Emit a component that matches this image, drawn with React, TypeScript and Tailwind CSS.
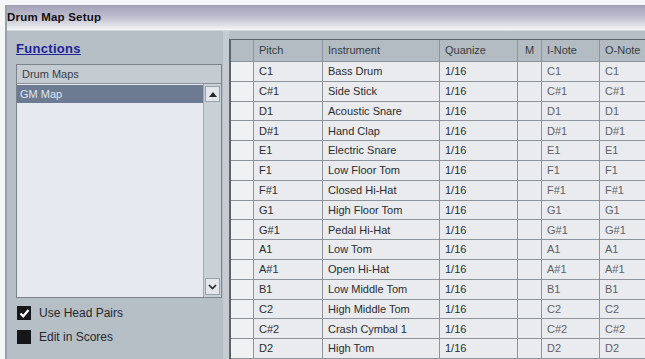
const rows: [string, string][] = [
  ["C1", "Bass Drum"],
  ["C#1", "Side Stick"],
  ["D1", "Acoustic Snare"],
  ["D#1", "Hand Clap"],
  ["E1", "Electric Snare"],
  ["F1", "Low Floor Tom"],
  ["F#1", "Closed Hi-Hat"],
  ["G1", "High Floor Tom"],
  ["G#1", "Pedal Hi-Hat"],
  ["A1", "Low Tom"],
  ["A#1", "Open Hi-Hat"],
  ["B1", "Low Middle Tom"],
  ["C2", "High Middle Tom"],
  ["C#2", "Crash Cymbal 1"],
  ["D2", "High Tom"],
];

const grid = "grid grid-cols-[23px_69px_117px_78px_24px_58px_90px]";
const cell = "flex items-center border-r border-b border-[#8d949b] px-[5px] whitespace-nowrap overflow-hidden";

function Checkbox({ checked }: { checked?: boolean }) {
  return (
    <div className="flex h-[14px] w-[14px] items-center justify-center bg-[#15171a]">
      {checked && (
        <svg width="11" height="11" viewBox="0 0 11 11">
          <path d="M1.5 5.5 L4.3 8.3 L9.5 2" fill="none" stroke="#ffffff" strokeWidth="2.2" />
        </svg>
      )}
    </div>
  );
}

export default function App() {
  return (
    <div className="flex h-[359px] w-[645px] flex-col overflow-hidden bg-[#f5f6f8] pb-[3px] pl-[5px] pt-[5px] font-['Liberation_Sans',Arial,sans-serif] text-[11px] text-[#2e3135]">
      <div className="flex flex-1 flex-col border-l-2 border-[#9aa2a9]">
        {/* Title bar */}
        <div className="flex h-[25px] items-center border-t border-[#a09eb0] bg-gradient-to-b from-[#a5a3b9] via-[#c2c1d1] to-[#f4f7f7]">
          <span className="text-[11.5px] font-bold tracking-[0.2px] text-[#101014]">Drum Map Setup</span>
        </div>

        {/* Body */}
        <div className="flex flex-1 overflow-hidden border-t border-[#d3d9dc] bg-[#b7bfc6]">
          {/* Left panel */}
          <div className="flex w-[216px] flex-col pl-[9px]">
            <div className="mt-[10px] h-[16px] text-[13px] font-bold leading-[16px] tracking-[0.3px] text-[#1c239c] underline">
              Functions
            </div>
            <div className="mt-[7px] flex h-[234px] w-[206px] flex-col border border-[#7c848b] bg-[#e6e9ef]">
              <div className="flex h-[19px] items-center border-b border-[#8a9299] bg-[#c4cbd1] pl-[5px] text-[#3a3e44]">
                Drum Maps
              </div>
              <div className="flex flex-1">
                <div className="flex flex-1 flex-col pt-[1px]">
                  <div className="flex h-[18px] items-center bg-[#6d7b92] pl-[3px] text-[#dfe5ef]">GM Map</div>
                </div>
                <div className="flex w-[18px] flex-col justify-between border-l border-[#a3abb2] bg-[#c9d1d7] px-[1px] py-[2px]">
                  <div className="flex h-[16px] items-center justify-center border border-[#9aa2a9] bg-[#e3e7ec]">
                    <svg width="8" height="5" viewBox="0 0 8 5">
                      <path d="M0 5 L4 0 L8 5 Z" fill="#23262a" />
                    </svg>
                  </div>
                  <div className="flex h-[17px] items-center justify-center border border-[#9aa2a9] bg-[#e3e7ec]">
                    <svg width="9" height="6" viewBox="0 0 9 6">
                      <path d="M1 1 L4.5 4.5 L8 1" fill="none" stroke="#23262a" strokeWidth="1.6" />
                    </svg>
                  </div>
                </div>
              </div>
            </div>
            <div className="mt-[6px] flex items-center gap-[8px] pl-[1px]">
              <Checkbox checked />
              <span className="text-[12px] text-[#25282c]">Use Head Pairs</span>
            </div>
            <div className="mt-[6px] flex items-center gap-[8px] pl-[1px]">
              <Checkbox />
              <span className="text-[12px] text-[#25282c]">Edit in Scores</span>
            </div>
          </div>

          {/* Separator strip */}
          <div className="w-[6px] bg-[#c5ccd1]" />

          {/* Table */}
          <div className="mt-[8px] flex-1 overflow-hidden border-l-2 border-t border-[#5c636a]">
            <div className={`${grid} h-[22px] bg-[#b4bcc3] text-[#383c41]`}>
              <div className={cell} />
              <div className={cell}>Pitch</div>
              <div className={cell}>Instrument</div>
              <div className={cell}>Quanize</div>
              <div className={`${cell} justify-center`}>M</div>
              <div className={cell}>I-Note</div>
              <div className={cell}>O-Note</div>
            </div>
            {rows.map(([pitch, name]) => (
              <div key={pitch} className={`${grid} h-[19.8px] bg-[#e9ebee]`}>
                <div className={`${cell} bg-[#f0f1f3]`} />
                <div className={`${cell} text-[#2a2d31]`}>{pitch}</div>
                <div className={`${cell} text-[#2a2d31]`}>{name}</div>
                <div className={`${cell} text-[#2a2d31]`}>1/16</div>
                <div className={cell} />
                <div className={`${cell} text-[#5d6166]`}>{pitch}</div>
                <div className={`${cell} text-[#5d6166]`}>{pitch}</div>
              </div>
            ))}
          </div>
        </div>
      </div>
    </div>
  );
}
